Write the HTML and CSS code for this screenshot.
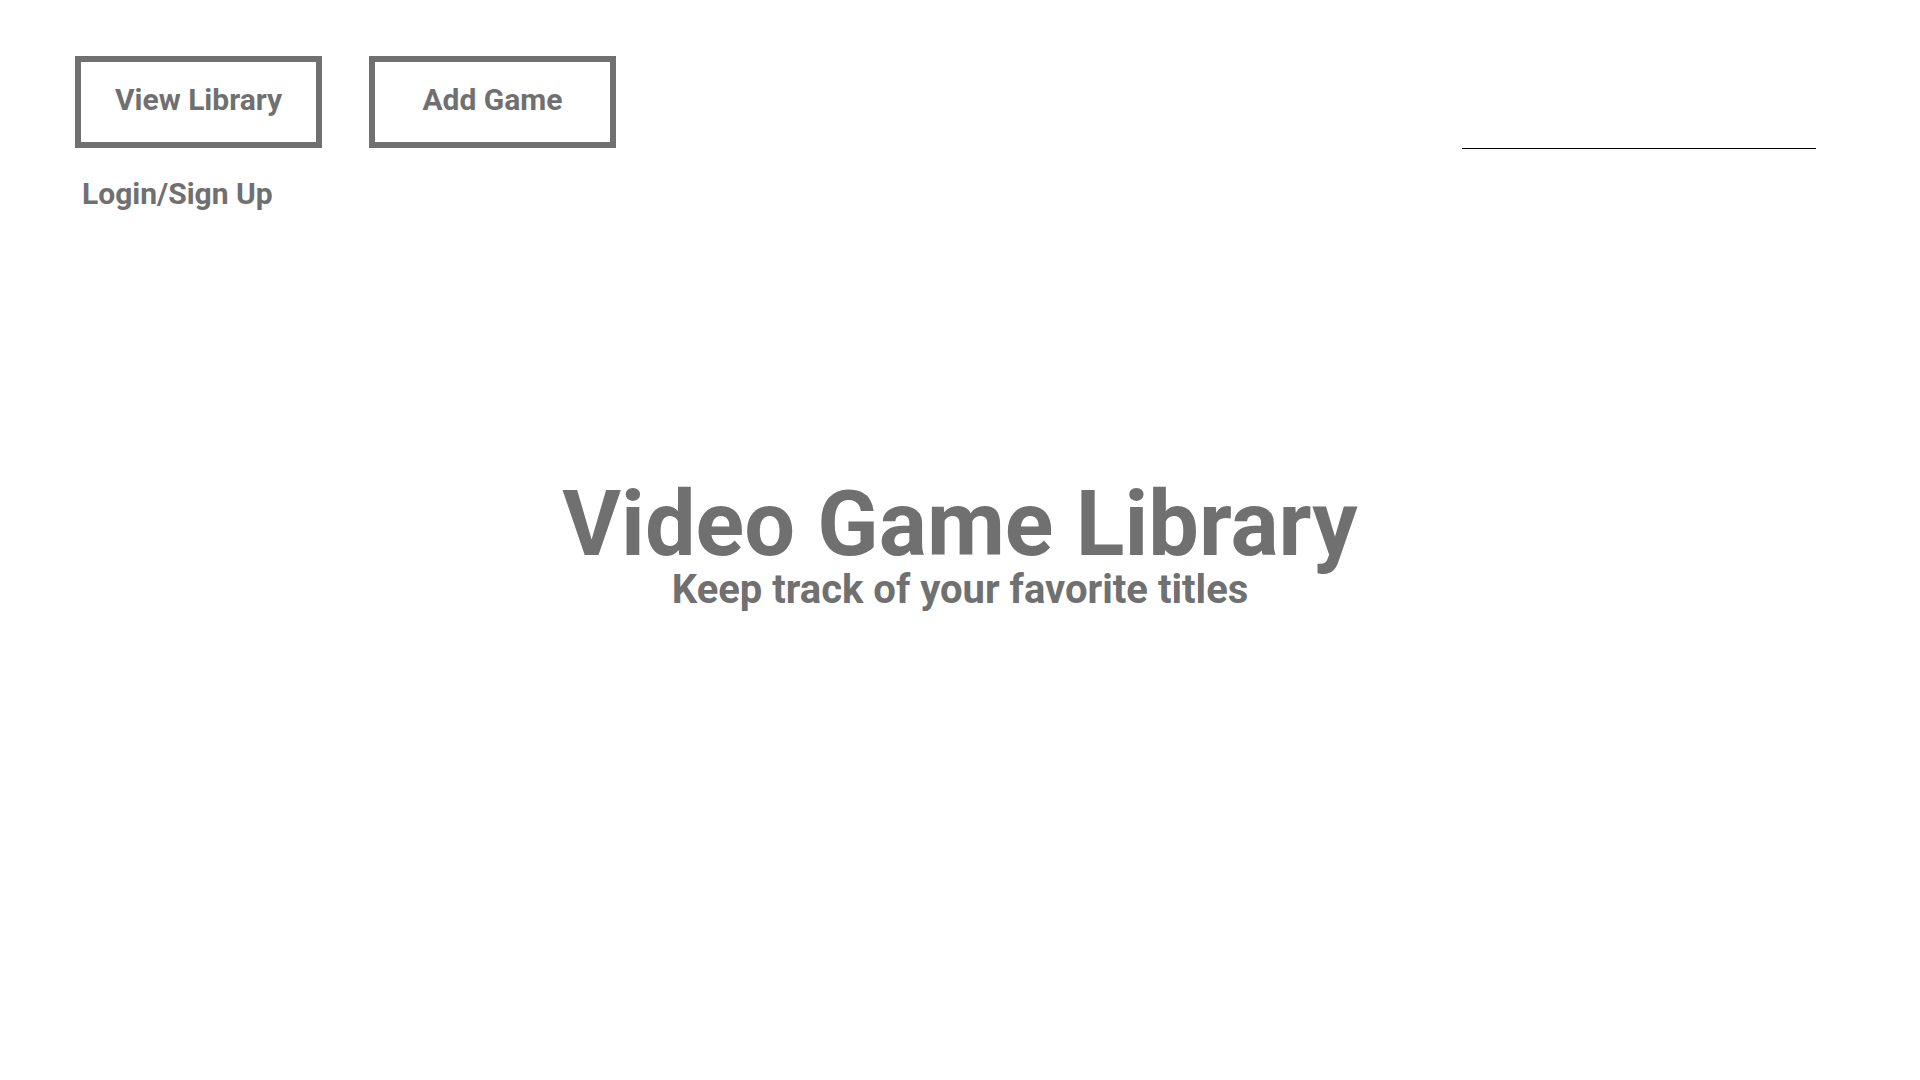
FILE: index.html
```html
<!DOCTYPE html>
<html lang="en">
<head>
<meta charset="utf-8">
<title>Video Game Library</title>
<link rel="stylesheet" href="styles.css">
</head>
<body>
<header class="top">
  <div class="nav">
    <div class="nav-buttons">
      <button class="nav-btn">View Library</button>
      <button class="nav-btn">Add Game</button>
    </div>
    <a class="login" href="#">Login/Sign Up</a>
  </div>
  <input class="search" type="text" aria-label="Search">
</header>
<main class="hero">
  <h1 class="title">Video Game Library</h1>
  <p class="subtitle">Keep track of your favorite titles</p>
</main>
</body>
</html>
```
FILE: styles.css
```css
html, body {
  margin: 0;
  padding: 0;
  background: #ffffff;
}
body {
  font-family: Roboto, "Liberation Sans", sans-serif;
  color: #707070;
  width: 1920px;
  height: 1080px;
  overflow: hidden;
}
.top {
  display: flex;
  justify-content: space-between;
  align-items: flex-start;
  padding: 56px 104px 0 75px;
}
.nav {
  display: flex;
  flex-direction: column;
}
.nav-buttons {
  display: flex;
  gap: 47px;
}
.nav-btn {
  box-sizing: border-box;
  width: 247px;
  height: 92px;
  border: 6px solid #707070;
  background: #ffffff;
  color: #707070;
  font-family: Roboto, "Liberation Sans", sans-serif;
  font-weight: 700;
  font-size: 30px;
  line-height: 1;
  padding: 0 0 4px 0;
  cursor: pointer;
}
.login {
  margin: 31px 0 0 7px;
  font-size: 30px;
  font-weight: 700;
  line-height: 1;
  color: #707070;
  text-decoration: none;
}
.search {
  box-sizing: border-box;
  width: 354px;
  height: 40px;
  margin-top: 53px;
  border: none;
  border-bottom: 1px solid #000000;
  outline: none;
  background: transparent;
  padding: 0;
}
.hero {
  display: flex;
  flex-direction: column;
  align-items: center;
  margin-top: 271px;
}
.title {
  margin: 0;
  font-size: 90px;
  font-weight: 700;
  line-height: 1;
}
.subtitle {
  margin: 0;
  font-size: 40px;
  font-weight: 700;
  line-height: 1;
}
```
